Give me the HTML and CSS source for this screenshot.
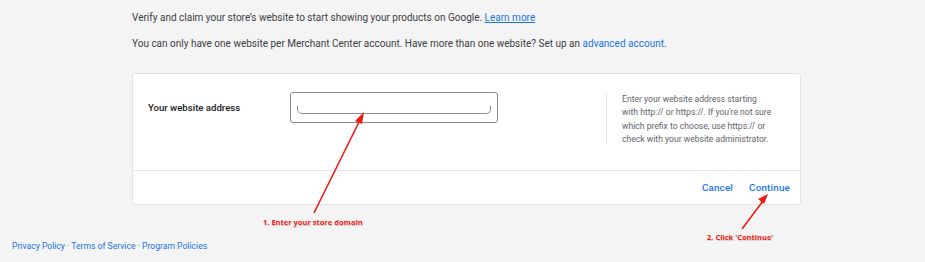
FILE: index.html
```html
<!DOCTYPE html>
<html lang="en">
<head>
    <meta charset="UTF-8">
    <title>Merchant Center - Website</title>
    <link rel="stylesheet" href="styles.css">
</head>
<body>
    <div class="page">
        <div class="content">
            <p class="intro">Verify and claim your store’s website to start showing your products on Google. <a href="#">Learn more</a></p>
            <p class="intro">You can only have one website per Merchant Center account. Have more than one website? Set up an <a href="#" class="plain">advanced account</a>.</p>

            <div class="card">
                <div class="card-body">
                    <div class="field-label">Your website address</div>
                    <div class="field-input">
                        <div class="input-line"></div>
                    </div>
                    <div class="field-help">
                        Enter your website address starting with http:// or https://. If you're not sure which prefix to choose, use https:// or check with your website administrator.
                    </div>
                </div>
                <div class="card-actions">
                    <a href="#" class="btn">Cancel</a>
                    <a href="#" class="btn">Continue</a>
                </div>
            </div>
        </div>

        <div class="footer">
            <a href="#">Privacy Policy</a> · <a href="#">Terms of Service</a> · <a href="#">Program Policies</a>
        </div>
    </div>

    <!-- tutorial annotations drawn over the page -->
    <svg class="arrows" width="925" height="262" viewBox="0 0 925 262">
        <line x1="314" y1="213" x2="360" y2="120" stroke="#f0190f" stroke-width="1.6"/>
        <polygon points="364,112 355,121 362,124" fill="#f0190f"/>
        <line x1="742" y1="229" x2="763" y2="201" stroke="#f0190f" stroke-width="1.6"/>
        <polygon points="768,194 758,199 764,204" fill="#f0190f"/>
    </svg>
    <div class="note note-one">1. Enter your store domain</div>
    <div class="note note-two">2. Click 'Continue'</div>
</body>
</html>
```

FILE: styles.css
```css
body {
    margin: 0;
    background: #f4f4f4;
    font-family: Roboto, "Liberation Sans", Arial, sans-serif;
    color: #3c4043;
    width: 925px;
    height: 262px;
    overflow: hidden;
    position: relative;
}

a {
    color: #1a73e8;
    text-decoration: none;
}

.content {
    width: 669px;
    margin-left: 132px;
    padding-top: 11px;
}

.intro {
    margin: 0 0 12px;
    font-size: 10px;
    line-height: 14px;
}

.intro a {
    text-decoration: underline;
}

.intro a.plain {
    text-decoration: none;
}

.card {
    margin-top: 22px;
    background: #fff;
    border: 1px solid #e2e2e2;
    border-radius: 3px;
    height: 132px;
    box-sizing: border-box;
    display: flex;
    flex-direction: column;
}

.card-body {
    display: flex;
    align-items: flex-start;
    height: 97px;
    border-bottom: 1px solid #e6e6e6;
    padding: 18px 0 0 15px;
    box-sizing: border-box;
}

.field-label {
    width: 142px;
    margin-top: 10px;
    font-size: 9.6px;
    font-weight: 500;
    color: #202124;
}

.field-input {
    width: 208px;
    height: 31px;
    border: 1px solid #8a8a8a;
    border-radius: 3px;
    box-sizing: border-box;
    padding: 0 6px;
}

.input-line {
    margin-top: 13px;
    height: 7px;
    border: 1px solid #8c8c8c;
    border-top: none;
    border-radius: 0 0 5px 5px;
}

.field-help {
    margin-left: 108px;
    border-left: 1px solid #e4e4e4;
    padding: 1px 0 0 15px;
    width: 152px;
    height: 51px;
    font-size: 8.6px;
    line-height: 13.4px;
    color: #5f6368;
}

.card-actions {
    flex: 1;
    display: flex;
    justify-content: flex-end;
    align-items: center;
    gap: 16px;
    padding-right: 10px;
}

.btn {
    font-size: 9.8px;
    font-weight: 500;
    letter-spacing: 0.2px;
}

.footer {
    margin: 36px 0 0 12px;
    font-size: 8.6px;
    color: #5f6368;
}

.arrows {
    position: absolute;
    top: 0;
    left: 0;
}

.note {
    position: absolute;
    font-family: "Open Sans", "Liberation Sans", sans-serif;
    font-size: 7.5px;
    font-weight: 700;
    color: #f0190f;
    text-shadow: 0 0 1px #fff, 0.5px 0.5px 0 #c9c9c9;
}

.note-one {
    left: 263px;
    top: 217px;
}

.note-two {
    left: 707px;
    top: 232px;
}
```
